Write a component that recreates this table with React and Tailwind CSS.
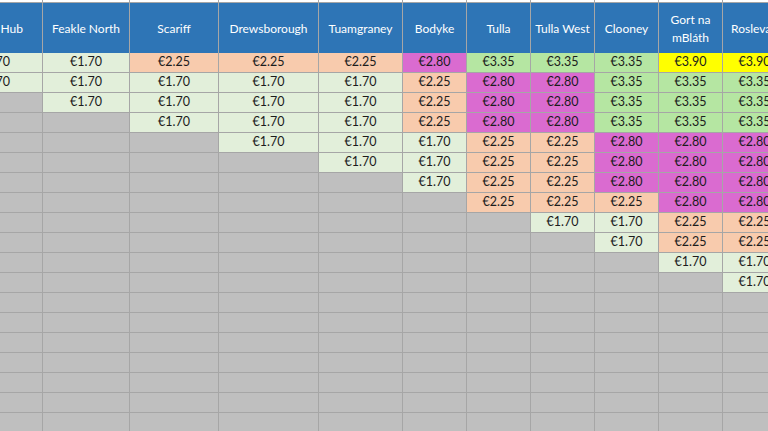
import React from 'react';
import clsx from 'clsx';

const FILL = {
  g: 'bg-[#e2efda]',
  s: 'bg-[#f8cbad]',
  m: 'bg-[#da6bd0]',
  l: 'bg-[#b5e6a2]',
  y: 'bg-[#ffff00]',
};

const rep = (n, v, c) => Array.from({ length: n }, () => [v, c]);

// fare grid, one column per stop, filled rows from the top
const columns = [
  {
    name: 'Killaloe Hub',
    w: 'w-[97px] -ml-[54px]',
    head: 'justify-end pr-[19px]',
    cells: rep(2, '1.70', 'g'),
  },
  { name: 'Feakle North', w: 'w-[87px]', cells: rep(3, '1.70', 'g') },
  { name: 'Scariff', w: 'w-[89px]', cells: [...rep(1, '2.25', 's'), ...rep(3, '1.70', 'g')] },
  { name: 'Drewsborough', w: 'w-[100px]', cells: [...rep(1, '2.25', 's'), ...rep(4, '1.70', 'g')] },
  { name: 'Tuamgraney', w: 'w-[84px]', cells: [...rep(1, '2.25', 's'), ...rep(5, '1.70', 'g')] },
  {
    name: 'Bodyke',
    w: 'w-[64px]',
    cells: [...rep(1, '2.80', 'm'), ...rep(3, '2.25', 's'), ...rep(3, '1.70', 'g')],
  },
  {
    name: 'Tulla',
    w: 'w-[64px]',
    cells: [...rep(1, '3.35', 'l'), ...rep(3, '2.80', 'm'), ...rep(4, '2.25', 's')],
  },
  {
    name: 'Tulla West',
    w: 'w-[64px]',
    cells: [...rep(1, '3.35', 'l'), ...rep(3, '2.80', 'm'), ...rep(4, '2.25', 's'), ...rep(1, '1.70', 'g')],
  },
  {
    name: 'Clooney',
    w: 'w-[64px]',
    cells: [...rep(4, '3.35', 'l'), ...rep(3, '2.80', 'm'), ...rep(1, '2.25', 's'), ...rep(2, '1.70', 'g')],
  },
  {
    name: 'Gort na mBláth',
    w: 'w-[64px]',
    cells: [
      ...rep(1, '3.90', 'y'),
      ...rep(3, '3.35', 'l'),
      ...rep(4, '2.80', 'm'),
      ...rep(2, '2.25', 's'),
      ...rep(1, '1.70', 'g'),
    ],
  },
  {
    name: 'Roslevan',
    w: 'w-[64px]',
    cells: [
      ...rep(1, '3.90', 'y'),
      ...rep(3, '3.35', 'l'),
      ...rep(4, '2.80', 'm'),
      ...rep(2, '2.25', 's'),
      ...rep(2, '1.70', 'g'),
    ],
  },
];

const ROWS = 19;

export default function App() {
  return (
    <div
      className="h-[431px] w-[768px] overflow-hidden bg-white text-[12.5px] text-[#1c1c1c]"
      style={{ fontFamily: 'Lato, "Open Sans", sans-serif' }}
    >
      <div className="flex w-max">
        {columns.map((col) => (
          <div key={col.name} className={clsx('flex shrink-0 flex-col', col.w)}>
            <div className="h-[3px] border-r border-b border-[#a6a6a6] bg-white" />
            <div
              className={clsx(
                'flex h-[50px] items-center border-r border-[#a6a6a6] bg-[#2e75b6] pt-[2px] text-center text-[12px] leading-[18px] text-white',
                col.head || 'justify-center'
              )}
            >
              {col.name}
            </div>
            {Array.from({ length: ROWS }, (_, r) => {
              const cell = col.cells[r];
              return (
                <div
                  key={r}
                  className={clsx(
                    'flex h-[20px] items-center justify-center border-r border-b border-[#a6a6a6]',
                    cell ? FILL[cell[1]] : 'bg-[#bfbfbf]'
                  )}
                >
                  {cell && `€${cell[0]}`}
                </div>
              );
            })}
          </div>
        ))}
      </div>
    </div>
  );
}
